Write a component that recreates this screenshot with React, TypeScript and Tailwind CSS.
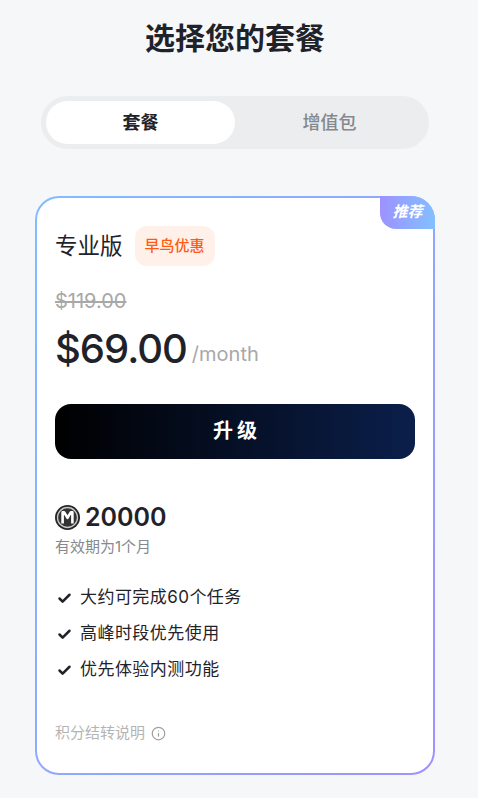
import { Check, Info } from "lucide-react";

const features = ["大约可完成60个任务", "高峰时段优先使用", "优先体验内测功能"];

const CreditIcon = () => (
  <svg width="25" height="25" viewBox="0 0 25 25" className="shrink-0">
    <circle cx="12.5" cy="12.5" r="12.5" fill="#262626" />
    <circle cx="12.5" cy="12.5" r="10" fill="#333333" stroke="#c8c8c8" strokeWidth="1.3" />
    <path d="M7.6 18.4V7.4h1.6l3.3 5.4 3.3-5.4h1.6v11" fill="none" stroke="#ffffff" strokeWidth="2.6" strokeLinejoin="round" />
  </svg>
);

export default function App() {
  return (
    <div className="h-[798px] overflow-hidden bg-[#f6f7f9] font-['Inter','Noto_Sans_CJK_SC',sans-serif] text-[#1f2329]">
      <div className="w-[470px]">
        <h1 className="pt-[17px] text-center text-[30px] leading-[42px] font-bold">选择您的套餐</h1>

        <div className="mx-[41px] mt-[37px] flex h-[53px] rounded-full bg-[#ecedef] p-[5px]">
          <div className="flex w-[189px] items-center justify-center rounded-full bg-white text-[18px] font-bold">套餐</div>
          <div className="flex flex-1 items-center justify-center text-[18px] font-medium text-[#85888c]">增值包</div>
        </div>

        <div className="relative mx-[35px] mt-[47px] h-[579px] rounded-[24px] bg-[linear-gradient(120deg,#82bdff_0%,#9d92ff_100%)] p-[2px]">
          <div className="absolute top-0 right-0 flex h-[33px] w-[55px] items-center justify-center rounded-tr-[24px] rounded-bl-[16px] bg-[linear-gradient(90deg,#9d92ff,#82c0ff)] text-[15px] font-bold text-white italic">
            推荐
          </div>
          <div className="h-full rounded-[22px] bg-white px-[18px] pt-[28px]">
            <div className="flex items-center gap-[12px]">
              <span className="text-[22.5px] leading-[40px]">专业版</span>
              <span className="flex h-[40px] w-[80px] items-center justify-center rounded-[12px] bg-[#fff1ea] text-[15px] font-medium text-[#ff5a14]">早鸟优惠</span>
            </div>
            <div className="mt-[21px] text-[20px] leading-[28px] text-[#a8a8a8] line-through">$119.00</div>
            <div className="mt-[7px] flex items-center gap-[5px]">
              <span className="text-[40px] leading-[54px] font-medium tracking-[-1px]">$69.00</span>
              <span className="mt-[9px] text-[20px] text-[#a8a8a8]">/month</span>
            </div>
            <div className="mt-[28px] flex h-[55px] w-[360px] items-center justify-center rounded-[16px] bg-[linear-gradient(90deg,#000000,#0b1f4b)] pb-[2px] pl-[4px] text-[20px] font-bold tracking-[4px] text-white">
              升级
            </div>
            <div className="mt-[42px] flex items-center gap-[5px]">
              <CreditIcon />
              <span className="text-[25px] leading-[32px] font-semibold">20000</span>
            </div>
            <div className="mt-[3px] text-[15px] leading-[22px] text-[#85888c]">有效期为1个月</div>
            <div className="mt-[28px] flex flex-col gap-[12px]">
              {features.map((f) => (
                <div key={f} className="flex h-[24px] items-center gap-[8px] pl-[2px] text-[17px] tracking-[0.45px]">
                  <Check size={15} strokeWidth={4} className="shrink-0" />
                  <span>{f}</span>
                </div>
              ))}
            </div>
            <div className="mt-[40px] flex items-center gap-[6px] text-[15px] leading-[22px] text-[#b4b4b4]">
              积分结转说明
              <Info size={15} strokeWidth={2} className="text-[#a0a0a0]" />
            </div>
          </div>
        </div>
      </div>
    </div>
  );
}
